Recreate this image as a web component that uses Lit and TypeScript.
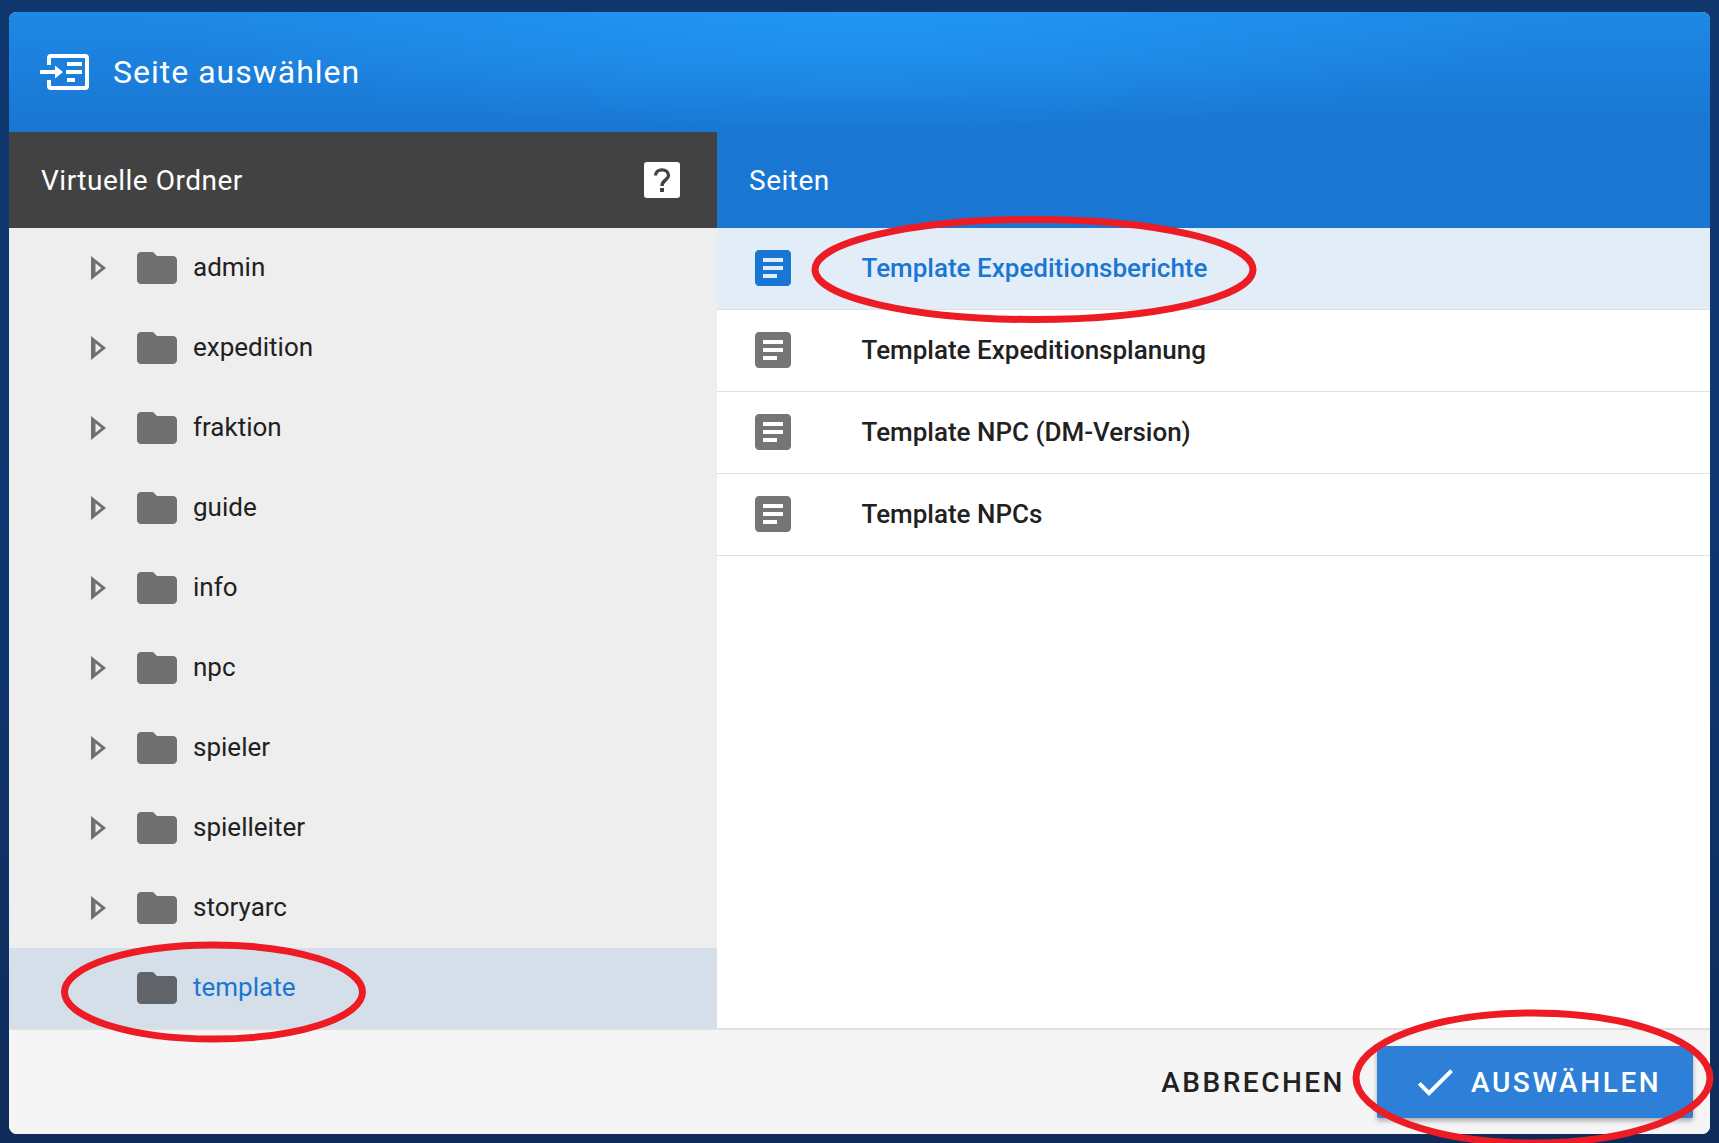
import { LitElement, html, css, svg } from "lit";
import { customElement } from "lit/decorators.js";

const folders = ["admin","expedition","fraktion","guide","info","npc","spieler","spielleiter","storyarc"];
const pages = ["Template Expeditionsberichte","Template Expeditionsplanung","Template NPC (DM-Version)","Template NPCs"];

const folderIcon = html`<svg class="folder" viewBox="2 4 20 16"><path d="M10 4H4c-1.1 0-1.99.9-1.99 2L2 18c0 1.1.9 2 2 2h16c1.1 0 2-.9 2-2V8c0-1.1-.9-2-2-2h-8l-2-2z"/></svg>`;
const arrowIcon = html`<svg class="arrow" viewBox="0 0 15 24"><path fill-rule="evenodd" d="M0 0L15 12 0 24ZM4.500 7.300V16.700L10.300 12Z"/></svg>`;
const pageIcon = html`<svg class="page" viewBox="3 3 18 18"><path d="M19 3H5c-1.1 0-2 .9-2 2v14c0 1.1.9 2 2 2h14c1.1 0 2-.9 2-2V5c0-1.1-.9-2-2-2zm-5 14H7v-2h7v2zm3-4H7v-2h10v2zm0-4H7V7h10v2z"/></svg>`;

@customElement("app-root")
export class AppRoot extends LitElement {
  static styles = css`
    :host { display: block; position: relative; box-sizing: border-box; height: 1143px; overflow: hidden;
      padding: 12px 9px 9px 9px; background: linear-gradient(180deg, #11376f 0%, #0f3672 45%, #0f2c59 100%);
      font-family: Roboto, "Liberation Sans", sans-serif; }
    .dialog { height: 100%; display: flex; flex-direction: column; border-radius: 8px; overflow: hidden; background: #fff; }
    .top { height: 120px; flex: none; display: flex; align-items: center; padding-left: 31px; gap: 24px; color: #fff;
      background: radial-gradient(ellipse 720px 120px at 50% 0, #2196f3 0%, rgba(33,150,243,0) 100%), linear-gradient(180deg, #1e88e5 0%, #1976d2 100%);
      font-size: 32px; letter-spacing: 1px; }
    .top svg { width: 49px; height: 36px; flex: none; }
    .columns { flex: 1; display: flex; min-height: 0; }
    .left { width: 708px; flex: none; display: flex; flex-direction: column; background: #eee; }
    .right { flex: 1; display: flex; flex-direction: column; }
    .head { height: 96px; flex: none; box-sizing: border-box; display: flex; align-items: center; justify-content: space-between;
      padding: 0 37px 0 32px; color: #fff; font-size: 28px; letter-spacing: .5px; }
    .left .head { background: #424242; }
    .right .head { background: #1976d2; }
    .help { width: 36px; height: 36px; display: block; }
    .folders { flex: 1; display: flex; flex-direction: column; }
    .frow { height: 80px; flex: none; display: flex; align-items: center; font-size: 26px; color: #212121; padding-left: 82px; }
    .frow span { margin-bottom: 2px; }
    .frow.sel { background: #d5dfea; color: #1976d2; }
    .arrow { width: 15px; height: 24px; fill: #707070; flex: none; }
    .folder { width: 40px; height: 32px; fill: #707070; flex: none; margin-left: 31px; margin-right: 16px; }
    .frow .arrowgap { width: 15px; flex: none; margin: 0; }
    .frow.sel .folder { fill: #616569; }
    .prow { height: 81px; flex: none; display: flex; align-items: center; border-bottom: 1px solid #e0e0e0;
      padding-left: 38px; font-size: 26px; font-weight: 500; color: #212121; }
    .prow span { margin-bottom: 2px; }
    .prow.sel { background: #e3edf8; color: #1976d2; }
    .page { width: 36px; height: 36px; fill: #757575; flex: none; margin-right: 70.500px; margin-bottom: 1px; }
    .prow.sel .page { fill: #1976d2; }
    .foot { height: 106px; flex: none; box-sizing: border-box; border-top: 2px solid #e0e0e0; background: #f5f5f5; display: flex; align-items: center;
      justify-content: flex-end; padding-right: 17px; gap: 32px; font-size: 28px; font-weight: 500; letter-spacing: 2.6px; color: #212121; }
    .cancel { letter-spacing: 2.500px; }
    .btn { width: 316px; height: 72px; box-sizing: border-box; display: flex; align-items: center; padding-left: 34px; gap: 12px; color: #fff; background: #2d7fd7;
      border-radius: 2px; box-shadow: 0 3px 5px rgba(0,0,0,.3); }
    .btn svg { width: 48px; height: 48px; fill: #fff; flex: none; }
    .marks { position: absolute; inset: 0; width: 100%; height: 100%; pointer-events: none; fill: none; stroke: #ed1c24; stroke-width: 7; }
  `;

  render() {
    return html`
      <div class="dialog">
        <div class="top">
          <svg viewBox="40 54 49 36">
            <path d="M49 65V58a2 2 0 0 1 2-2H85a2 2 0 0 1 2 2V86a2 2 0 0 1-2 2H51a2 2 0 0 1-2-2V80" fill="none" stroke="#fff" stroke-width="4"/>
            <path d="M40 70H55V65.500L63 72 55 78.500V74H40Z M67 62H82V66H67Z M66 70H82V74H66Z M67 78H75V82H67Z" fill="#fff"/>
          </svg>
          <span>Seite auswählen</span>
        </div>
        <div class="columns">
          <div class="left">
            <div class="head"><span>Virtuelle Ordner</span>
              <svg class="help" viewBox="0 0 36 36"><rect width="36" height="36" rx="3" fill="#fff"/><path d="M11.500 13.500C11.500 6 24.500 6 24.500 13.500C24.500 18 18 18 18 24" fill="none" stroke="#424242" stroke-width="3.400"/><rect x="16" y="26" width="4" height="4" fill="#424242"/></svg>
            </div>
            <div class="folders">
              ${folders.map(f => html`<div class="frow">${arrowIcon}${folderIcon}<span>${f}</span></div>`)}
              <div class="frow sel"><i class="arrowgap"></i>${folderIcon}<span>template</span></div>
            </div>
          </div>
          <div class="right">
            <div class="head"><span>Seiten</span></div>
            ${pages.map((p, i) => html`<div class="prow ${i === 0 ? "sel" : ""}">${pageIcon}<span>${p}</span></div>`)}
          </div>
        </div>
        <div class="foot">
          <span class="cancel">ABBRECHEN</span>
          <div class="btn">
            <svg viewBox="0 0 24 24"><path d="M9 16.170L4.830 12l-1.410 1.410L9 19 21 7l-1.410-1.410z"/></svg>
            <span>AUSWÄHLEN</span>
          </div>
        </div>
      </div>
      <svg class="marks" viewBox="0 0 1719 1143">
        ${svg`<ellipse cx="1034" cy="269.500" rx="219" ry="50"/>
        <ellipse cx="213.500" cy="992" rx="149" ry="47"/>
        <ellipse cx="1533" cy="1078" rx="177" ry="65"/>`}
      </svg>
    `;
  }
}
